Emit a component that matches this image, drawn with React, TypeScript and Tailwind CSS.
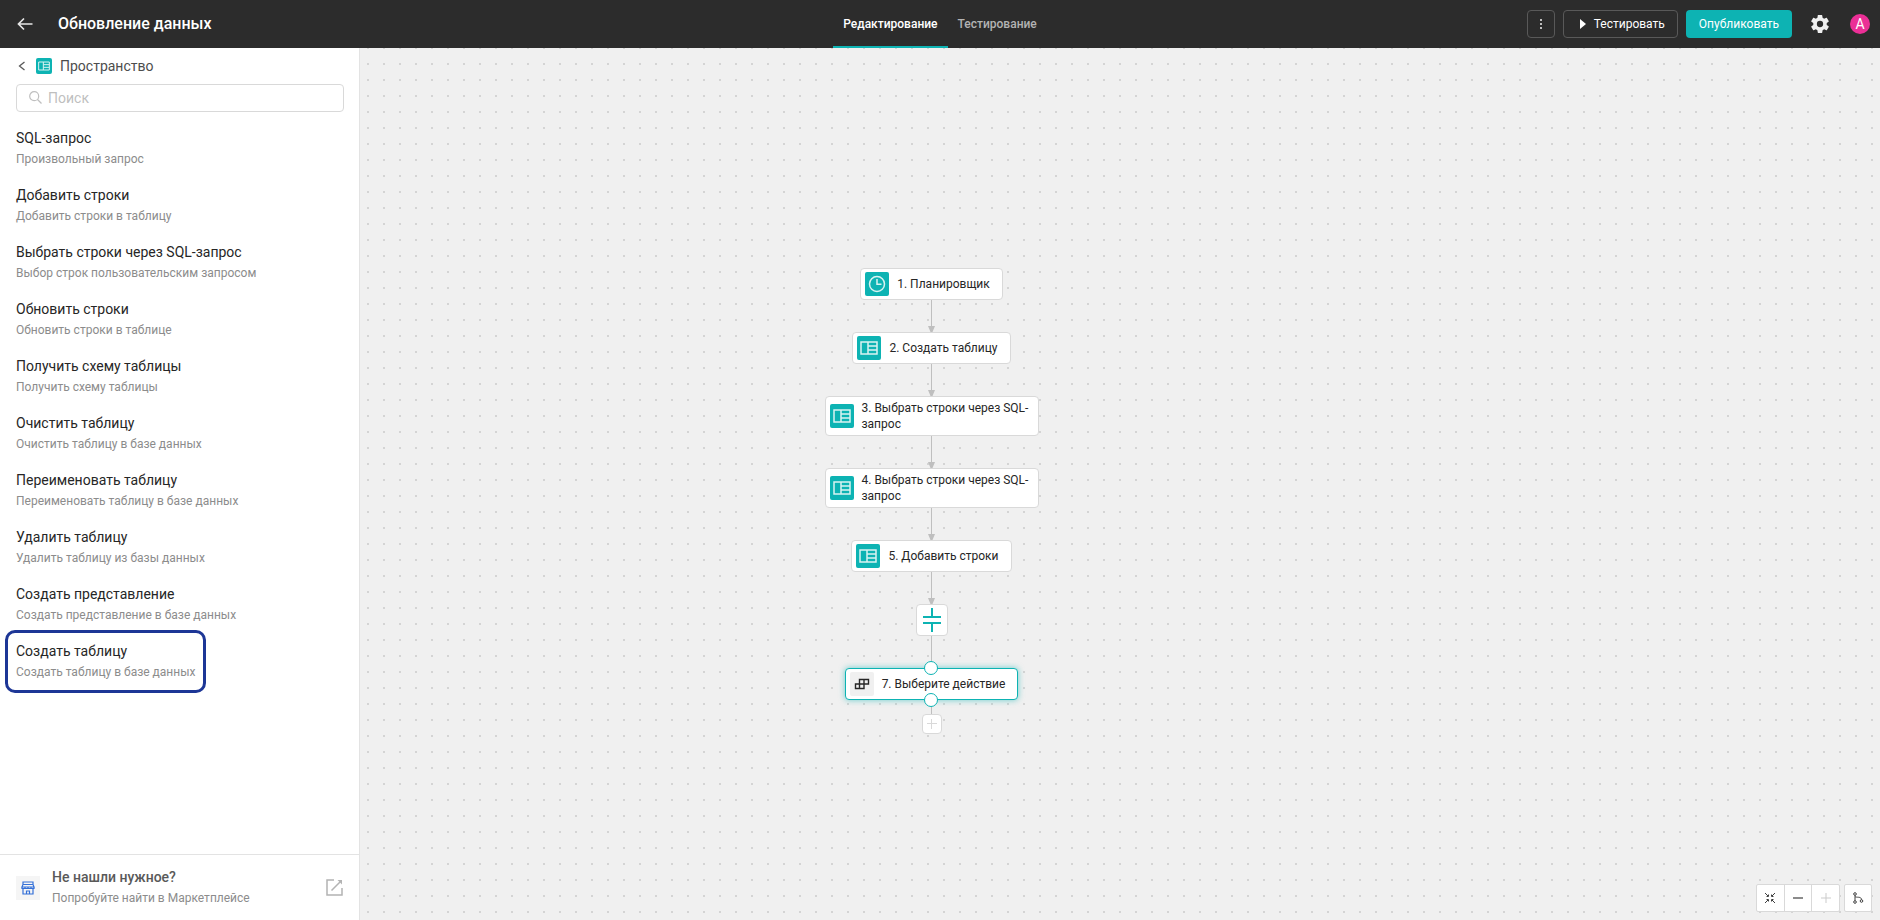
import type { ReactNode } from "react";

const actions = [
  { title: "SQL-запрос", text: "Произвольный запрос" },
  { title: "Добавить строки", text: "Добавить строки в таблицу" },
  { title: "Выбрать строки через SQL-запрос", text: "Выбор строк пользовательским запросом" },
  { title: "Обновить строки", text: "Обновить строки в таблице" },
  { title: "Получить схему таблицы", text: "Получить схему таблицы" },
  { title: "Очистить таблицу", text: "Очистить таблицу в базе данных" },
  { title: "Переименовать таблицу", text: "Переименовать таблицу в базе данных" },
  { title: "Удалить таблицу", text: "Удалить таблицу из базы данных" },
  { title: "Создать представление", text: "Создать представление в базе данных" },
  { title: "Создать таблицу", text: "Создать таблицу в базе данных", active: true },
];

const steps = [
  { label: "1. Планировщик", icon: ClockIcon },
  { label: "2. Создать таблицу", icon: TableIcon },
  { label: "3. Выбрать строки через SQL-запрос", icon: TableIcon, wide: true },
  { label: "4. Выбрать строки через SQL-запрос", icon: TableIcon, wide: true },
  { label: "5. Добавить строки", icon: TableIcon },
];

function TableIcon({ className }: { className?: string }) {
  return (
    <svg viewBox="0 0 24 24" className={className} fill="none" stroke="#d9f3f2" strokeWidth="1.5" aria-hidden="true">
      <path d="M4 6h16v12H4zM11 6v12M11 10h9M11 14h9" />
    </svg>
  );
}

function ClockIcon({ className }: { className?: string }) {
  return (
    <svg viewBox="0 0 24 24" className={className} fill="none" stroke="#d9f3f2" strokeWidth="1.5" aria-hidden="true">
      <circle cx="12" cy="12" r="7.5" />
      <path d="M12 7v5.2h4.5" />
    </svg>
  );
}

function Arrow() {
  return (
    <svg width="7" height="32" viewBox="0 0 7 32" className="block" aria-hidden="true">
      <path d="M3 0h1v27H3z" fill="#bfbfbf" />
      <path d="M0 26h7L4.5 32h-2z" fill="#bfbfbf" />
    </svg>
  );
}

function Step({ label, wide, children }: { label: string; wide?: boolean; children: ReactNode }) {
  return (
    <button
      type="button"
      className={`flex min-h-8 items-center gap-2 rounded border border-[#d9d9d9] bg-white py-[3px] pl-1 text-left text-xs leading-4 text-[#262626] ${wide ? "w-[214px] pr-2" : "pr-3"}`}
    >
      <span className="flex h-6 w-6 shrink-0 items-center justify-center rounded-xs bg-[#0db3b3]">{children}</span>
      <span>{label}</span>
    </button>
  );
}

function Header() {
  return (
    <header className="grid h-12 shrink-0 grid-cols-[1fr_auto_1fr] items-center bg-[#2c2c2c] text-white">
      <div className="flex items-center">
        <a href="#back" aria-label="Назад" className="ml-4 flex h-5 w-[42px] items-center">
          <svg width="18" height="16" viewBox="0 0 18 16" fill="none" stroke="#e6e6e6" strokeWidth="1.7" aria-hidden="true">
            <path d="M16.5 8H2.5M8 2.5 2.5 8 8 13.5" />
          </svg>
        </a>
        <h1 className="text-base font-medium">Обновление данных</h1>
      </div>
      <nav className="flex h-full text-xs font-medium">
        <a href="#edit" className="flex items-center border-b-2 border-[#0db3b3] px-2.5 pt-0.5">Редактирование</a>
        <a href="#test" className="flex items-center border-b-2 border-transparent px-2.5 pt-0.5 text-[#b3b3b3]">Тестирование</a>
      </nav>
      <div className="flex items-center justify-end gap-2 pr-2.5 text-xs">
        <button type="button" aria-label="Ещё" className="flex h-7 w-7 items-center justify-center rounded border border-[#595959]">
          <svg width="4" height="12" viewBox="0 0 4 12" fill="#bfbfbf" aria-hidden="true">
            <path d="M1 1h2v2H1zM1 5h2v2H1zM1 9h2v2H1z" />
          </svg>
        </button>
        <button type="button" className="flex h-7 items-center gap-2 rounded border border-[#595959] pr-3 pl-4">
          <svg width="6" height="10" viewBox="0 0 6 10" fill="#fff" aria-hidden="true">
            <path d="M0 0l6 5-6 5z" />
          </svg>
          Тестировать
        </button>
        <button type="button" className="h-7 rounded bg-[#0db3b3] px-[13px]">Опубликовать</button>
        <button type="button" aria-label="Настройки" className="ml-2.5 flex h-5 w-5 items-center justify-center">
          <svg width="18" height="18" viewBox="2 2 20 20" fill="#f0f0f0" aria-hidden="true">
            <path d="M19.43 12.98c.04-.32.07-.64.07-.98s-.03-.66-.07-.98l2.11-1.65c.19-.15.24-.42.12-.64l-2-3.46c-.12-.22-.39-.3-.61-.22l-2.49 1c-.52-.4-1.08-.73-1.69-.98l-.38-2.65A.49.49 0 0 0 14 2h-4c-.25 0-.46.18-.49.42l-.38 2.65c-.61.25-1.17.59-1.69.98l-2.49-1c-.23-.09-.49 0-.61.22l-2 3.46c-.13.22-.07.49.12.64l2.11 1.65c-.04.32-.07.65-.07.98s.03.66.07.98l-2.11 1.65c-.19.15-.24.42-.12.64l2 3.46c.12.22.39.3.61.22l2.49-1c.52.4 1.08.73 1.69.98l.38 2.65c.03.24.24.42.49.42h4c.25 0 .46-.18.49-.42l.38-2.65c.61-.25 1.17-.59 1.69-.98l2.49 1c.23.09.49 0 .61-.22l2-3.46c.12-.22.07-.49-.12-.64zM12 15.5a3.5 3.5 0 1 1 0-7 3.5 3.5 0 0 1 0 7z" />
          </svg>
        </button>
        <button type="button" className="ml-3 flex h-5 w-5 items-center justify-center rounded-full bg-[#eb2f96] text-sm">A</button>
      </div>
    </header>
  );
}

function Sidebar() {
  return (
    <aside className="flex w-[360px] shrink-0 flex-col border-r border-[#e3e3e3] bg-white">
      <div className="flex h-9 items-center px-4">
        <button type="button" aria-label="Назад к списку" className="flex h-5 w-5 items-center">
          <svg width="12" height="12" viewBox="0 0 12 12" fill="none" stroke="#595959" strokeWidth="1.3" aria-hidden="true">
            <path d="M8.5 2 3.5 6l5 4" />
          </svg>
        </button>
        <span className="flex h-4 w-4 items-center justify-center rounded-xs bg-[#0db3b3]">
          <TableIcon className="h-4 w-4" />
        </span>
        <h2 className="ml-2 text-sm text-[#4d4d4d]">Пространство</h2>
      </div>
      <label className="mr-[15px] ml-4 flex h-7 items-center gap-1.5 rounded border border-[#d9d9d9] pb-px pl-3">
        <svg width="13" height="13" viewBox="0 0 13 13" fill="none" stroke="#bfbfbf" strokeWidth="1.2" aria-hidden="true">
          <circle cx="5.2" cy="5.2" r="4.5" />
          <path d="m8.5 8.5 4 4" />
        </svg>
        <input type="text" placeholder="Поиск" aria-label="Поиск" className="min-w-0 flex-1 text-sm outline-none placeholder:text-[#bfbfbf]" />
      </label>
      <ul className="mt-2 flex-1">
        {actions.map(({ title, text, active }) => (
          <li key={title} className="px-4">
            <button type="button" className="relative block py-2 text-left">
              <span className="block text-sm leading-[21px] text-[#262626]">{title}</span>
              <span className="block text-xs leading-5 text-[#8c8c8c]">{text}</span>
              {active && <span className="absolute -inset-x-[11px] -inset-y-[3px] rounded-[10px] border-3 border-[#1d3696]" />}
            </button>
          </li>
        ))}
      </ul>
      <a href="#market" className="flex h-[66px] items-center border-t border-[#e3e3e3] px-4">
        <span className="flex h-6 w-6 items-center justify-center bg-[#f5f5f5]">
          <svg width="14" height="14" viewBox="0 0 14 14" fill="none" stroke="#3470d8" strokeWidth="1.2" aria-hidden="true">
            <path d="M2 1h10v2.5l1 2.5H1l1-2.5zM1.500 3.500h11M1 6v1.500h3V6v1.500h3V6v1.500h3V6v1.500h3V6M2 7.500V13h10V7.500M5.500 13v-3h3v3" />
          </svg>
        </span>
        <span className="ml-3 flex-1">
          <span className="block text-sm leading-[21px] font-medium text-[#595959]">Не нашли нужное?</span>
          <span className="block text-xs leading-5 text-[#8c8c8c]">Попробуйте найти в Маркетплейсе</span>
        </span>
        <svg width="17" height="17" viewBox="0 0 17 17" fill="none" stroke="#b3b3b3" strokeWidth="1.500" aria-hidden="true">
          <path d="M8 1H1v15h15V9M5.500 11.500 14 3" />
          <path d="M11.500 1H16v4.500z" fill="#b3b3b3" stroke="none" />
        </svg>
      </a>
    </aside>
  );
}

function Flow() {
  return (
    <div className="absolute top-[220px] left-[464px] flex w-[215px] flex-col items-center">
      {steps.map(({ label, icon: Icon, wide }) => (
        <div key={label} className="flex flex-col items-center">
          <Step label={label} wide={wide}>
            <Icon className="h-6 w-6" />
          </Step>
          <Arrow />
        </div>
      ))}
      <button type="button" aria-label="Соединение" className="flex h-8 w-8 items-center justify-center rounded border border-[#d9d9d9] bg-white">
        <svg width="18" height="24" viewBox="0 0 18 24" fill="#0db3b3" aria-hidden="true">
          <path d="M8 0h2v8h8v2H0V8h8zM0 14h18v2h-8v8H8v-8H0z" />
        </svg>
      </button>
      <div className="h-8 w-px bg-[#bfbfbf]" />
      <div className="relative">
        <button type="button" className="flex h-8 items-center gap-2 rounded border border-[#0db3b3] bg-white pr-3 pl-1 text-xs text-[#262626] shadow-[0_0_6px_rgba(13,179,179,0.6)]">
          <span className="flex h-6 w-6 items-center justify-center rounded-xs bg-[#f0f0f0]">
            <svg width="16" height="12" viewBox="0 0 16 12" fill="none" stroke="#262626" strokeWidth="1.400" aria-hidden="true">
              <path d="M5.500 1.500h9v4.500h-9zM1.500 6h8.500v4.500H1.500zM10 1.500V6M5.500 6v4.500" />
            </svg>
          </span>
          7. Выберите действие
        </button>
        <span className="absolute -top-[7px] left-1/2 h-3.5 w-3.5 -translate-x-1/2 rounded-full border border-[#0db3b3] bg-white" />
        <span className="absolute -bottom-[7px] left-1/2 h-3.5 w-3.5 -translate-x-1/2 rounded-full border border-[#0db3b3] bg-white" />
      </div>
      <div className="h-3.5 w-px bg-[#bfbfbf]" />
      <button type="button" aria-label="Добавить шаг" className="flex h-5 w-5 items-center justify-center rounded border border-[#d9d9d9] bg-white">
        <svg width="10" height="10" viewBox="0 0 10 10" fill="#d9d9d9" aria-hidden="true">
          <path d="M4 0h1v4h5v1H5v5H4V5H0V4h4z" />
        </svg>
      </button>
    </div>
  );
}

function Controls() {
  return (
    <div className="absolute right-2 bottom-2 flex gap-1">
      <div className="flex h-7 w-[84px] divide-x divide-[#d9d9d9] rounded-xs border border-[#d9d9d9] bg-white">
        <button type="button" aria-label="По размеру экрана" className="flex flex-1 items-center justify-center">
          <svg width="12" height="12" viewBox="0 0 12 12" fill="none" stroke="#404040" strokeWidth="1" aria-hidden="true">
            <path d="m1 1 3 3M11 1 8 4M1 11l3-3M11 11 8 8M4.500 2.500v2h-2M7.500 2.500v2h2M4.500 9.500v-2h-2M7.500 9.500v-2h2" />
          </svg>
        </button>
        <button type="button" aria-label="Уменьшить" className="flex flex-1 items-center justify-center">
          <svg width="10" height="10" viewBox="0 0 10 10" aria-hidden="true">
            <path d="M0 4h10v2H0z" fill="#8c8c8c" />
          </svg>
        </button>
        <button type="button" aria-label="Увеличить" disabled className="flex flex-1 items-center justify-center">
          <svg width="10" height="10" viewBox="0 0 10 10" aria-hidden="true">
            <path d="M4.500 0h1v4.500H10v1H5.500V10h-1V5.500H0v-1h4.500z" fill="#cccccc" />
          </svg>
        </button>
      </div>
      <button type="button" aria-label="Выровнять схему" className="flex h-7 w-7 items-center justify-center rounded-xs border border-[#d9d9d9] bg-white">
        <svg width="12" height="12" viewBox="0 0 12 12" fill="none" stroke="#404040" aria-hidden="true">
          <circle cx="3" cy="2" r="1.300" />
          <circle cx="3" cy="10" r="1.300" />
          <circle cx="9.500" cy="9" r="1.300" />
          <path d="M3 3.300v5.400M3 4.500c1 1.500 6.500-.5 6.500 3.200" />
        </svg>
      </button>
    </div>
  );
}

export default function App() {
  return (
    <div className="flex h-screen flex-col overflow-hidden font-[Roboto,sans-serif]">
      <Header />
      <div className="flex min-h-0 flex-1">
        <Sidebar />
        <main className="relative flex-1 bg-[#f0f0f0] bg-[conic-gradient(from_270deg_at_2px_2px,#d4d4d4_90deg,transparent_0)] bg-[length:16px_16px] bg-[position:7px_15px]">
          <Flow />
          <Controls />
        </main>
      </div>
    </div>
  );
}
